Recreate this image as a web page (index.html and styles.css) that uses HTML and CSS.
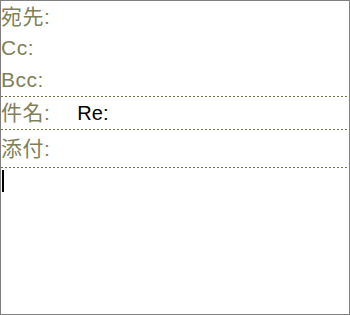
FILE: index.html
```html
<!DOCTYPE html>
<html>
<head>
<meta charset="utf-8">
<link rel="stylesheet" href="styles.css">
</head>
<body>
<div class="frame">
  <div class="row r1"><span class="label">宛先:</span></div>
  <div class="row r2"><span class="label">Cc:</span></div>
  <div class="row r3 sep"><span class="label">Bcc:</span></div>
  <div class="row r4 sep"><span class="label">件名:</span><span class="value">Re:</span></div>
  <div class="row r5 sep"><span class="label">添付:</span></div>
  <div class="body"><span class="caret"></span></div>
</div>
</body>
</html>
```
FILE: styles.css
```css
html, body { margin: 0; padding: 0; background: #fff; }
.frame {
  width: 350px; height: 315px; box-sizing: border-box;
  border: 1px solid #808080;
  font-family: "Liberation Sans", "Noto Sans CJK JP", sans-serif;
}
.row { display: flex; align-items: center; }
.sep {
  padding-bottom: 1px;
  background: repeating-linear-gradient(to right, #6f6f45 0 2px, transparent 2px 4px) bottom / 100% 1px no-repeat;
}
.label { color: #7f7f5a; font-size: 21px; line-height: 24px; letter-spacing: 0.5px; }
.r1 { height: 31px; }
.r2 { height: 32px; }
.r3 { height: 32px; }
.r4 { height: 32px; }
.r5 { height: 37px; }
.value { margin-left: 27px; color: #000; font-size: 20px; }
.body { padding: 2px 0 0 1px; }
.caret { display: block; width: 2px; height: 22px; background: #000; }
```
